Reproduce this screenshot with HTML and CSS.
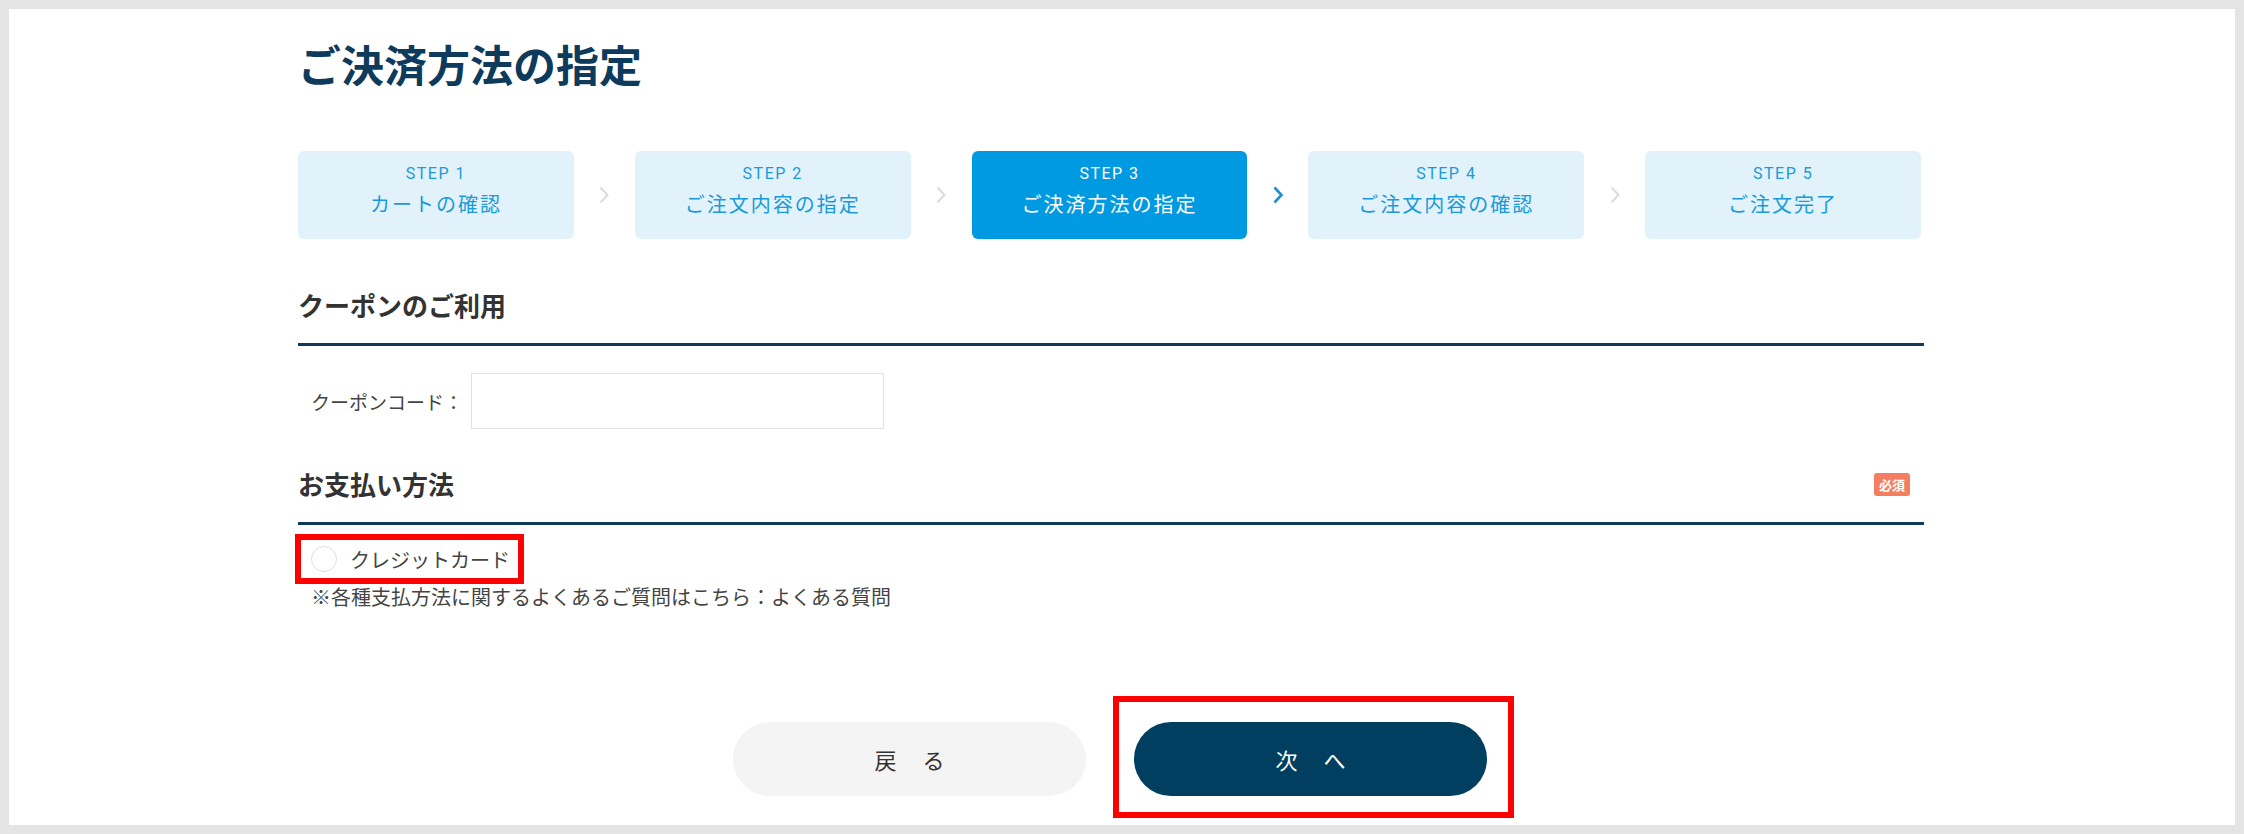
FILE: index.html
```html
<!DOCTYPE html>
<html lang="ja">
<head>
    <meta charset="UTF-8">
    <title>ご決済方法の指定</title>
    <link rel="stylesheet" href="styles.css">
</head>
<body>
    <div class="frame">
        <div class="container">
            <h1 class="page-title">ご決済方法の指定</h1>

            <ol class="steps">
                <li class="step">
                    <span class="step-no">STEP 1</span>
                    <span class="step-name">カートの確認</span>
                </li>
                <li class="step-arrow"><svg width="10" height="18" viewBox="0 0 10 18"><polyline points="1.5,1.5 8.5,9 1.5,16.5" /></svg></li>
                <li class="step">
                    <span class="step-no">STEP 2</span>
                    <span class="step-name">ご注文内容の指定</span>
                </li>
                <li class="step-arrow"><svg width="10" height="18" viewBox="0 0 10 18"><polyline points="1.5,1.5 8.5,9 1.5,16.5" /></svg></li>
                <li class="step current">
                    <span class="step-no">STEP 3</span>
                    <span class="step-name">ご決済方法の指定</span>
                </li>
                <li class="step-arrow next"><svg width="10" height="18" viewBox="0 0 10 18"><polyline points="1.5,1.5 8.5,9 1.5,16.5" /></svg></li>
                <li class="step">
                    <span class="step-no">STEP 4</span>
                    <span class="step-name">ご注文内容の確認</span>
                </li>
                <li class="step-arrow"><svg width="10" height="18" viewBox="0 0 10 18"><polyline points="1.5,1.5 8.5,9 1.5,16.5" /></svg></li>
                <li class="step">
                    <span class="step-no">STEP 5</span>
                    <span class="step-name">ご注文完了</span>
                </li>
            </ol>

            <!-- coupon -->
            <h2 class="section-title coupon-title">クーポンのご利用</h2>
            <div class="coupon-row">
                <label for="coupon" class="coupon-label">クーポンコード：</label>
                <input type="text" id="coupon" class="coupon-input">
            </div>

            <!-- payment -->
            <h2 class="section-title payment-title">
                <span>お支払い方法</span>
                <span class="required">必須</span>
            </h2>
            <label class="payment-option marked">
                <span class="radio"></span>
                <span>クレジットカード</span>
            </label>
            <p class="note">※各種支払方法に関するよくあるご質問はこちら：よくある質問</p>

            <div class="actions">
                <button class="btn btn-back"><span>戻</span><span>る</span></button>
                <div class="marked marked-btn">
                    <button class="btn btn-next"><span>次</span><span>へ</span></button>
                </div>
            </div>
        </div>
    </div>
</body>
</html>
```

FILE: styles.css
```css
* {
    box-sizing: border-box;
}
body {
    margin: 0;
    font-family: "Noto Sans CJK JP", "Noto Sans", sans-serif;
    color: #333;
}
.frame {
    height: 834px;
    border: 9px solid #e4e4e4;
    background: #fff;
    padding-top: 24px;
}
.container {
    width: 1626px;
    margin-left: 289px;
}
.page-title {
    margin: 0;
    font-size: 43px;
    line-height: 60px;
    font-weight: 700;
    color: #0e3b5b;
}

/* steps */
.steps {
    list-style: none;
    margin: 58px 3px 0 0;
    padding: 0;
    display: flex;
}
.step {
    flex: 1;
    height: 88px;
    border-radius: 6px;
    background: #e1f2fa;
    color: #1a9ad9;
    display: flex;
    flex-direction: column;
    align-items: center;
    justify-content: center;
    gap: 4px;
    padding-bottom: 8px;
}
.step.current {
    background: #009ae2;
    color: #fff;
}
.step-no {
    font-family: Roboto, "Liberation Sans", sans-serif;
    font-size: 16px;
    font-weight: 400;
    letter-spacing: 1.5px;
    line-height: 22px;
}
.step-name {
    font-size: 20px;
    font-weight: 400;
    letter-spacing: 2px;
    line-height: 30px;
}
.step-arrow {
    width: 61px;
    display: flex;
    align-items: center;
    justify-content: center;
}
.step-arrow polyline {
    fill: none;
    stroke: #dcdcdc;
    stroke-width: 2;
}
.step-arrow.next polyline {
    stroke: #1b8fd0;
    stroke-width: 2.6;
}

/* sections */
.section-title {
    margin: 0;
    font-size: 26px;
    line-height: 36px;
    font-weight: 700;
    color: #333;
    padding-bottom: 20px;
    border-bottom: 3px solid #0e3b5b;
}
.coupon-title {
    margin-top: 48px;
}
.coupon-row {
    display: flex;
    align-items: center;
    margin-top: 27px;
    padding-left: 13px;
}
.coupon-label {
    font-size: 19px;
    color: #444;
    margin-right: 8px;
}
.coupon-input {
    width: 413px;
    height: 56px;
    border: 1px solid #e3e3e3;
    outline: none;
}
.payment-title {
    margin-top: 37px;
    display: flex;
    justify-content: space-between;
    align-items: center;
    padding-right: 14px;
}
.required {
    width: 36px;
    height: 23px;
    border-radius: 3px;
    background: #f47e5f;
    color: #fff;
    font-size: 13px;
    line-height: 23px;
    text-align: center;
    font-weight: 700;
}
.payment-option {
    display: inline-flex;
    align-items: center;
    gap: 13px;
    margin: 9px 0 0 -3px;
    height: 50px;
    padding: 0 8px 0 10px;
    font-size: 20px;
    color: #444;
}
.radio {
    width: 26px;
    height: 26px;
    border-radius: 50%;
    border: 1px solid #dedede;
    background: #fff;
}
.note {
    margin: 0;
    padding-left: 13px;
    font-size: 20px;
    line-height: 26px;
    color: #444;
}

/* red annotation frames */
.marked {
    border: 6px solid #f00;
}

.actions {
    display: flex;
    justify-content: center;
    align-items: flex-start;
    gap: 27px;
    margin-top: 86px;
    padding-left: 25px;
}
.btn {
    width: 353px;
    height: 74px;
    border: none;
    border-radius: 37px;
    font-family: "Noto Sans CJK JP", sans-serif;
    font-size: 22px;
    display: flex;
    align-items: center;
    justify-content: center;
    gap: 26px;
    cursor: pointer;
}
.btn-back {
    margin-top: 26px;
    background: #f4f4f4;
    color: #333;
}
.btn-next {
    background: #003f5f;
    color: #fff;
}
.marked-btn {
    padding: 20px 21px 16px 15px;
}
```
